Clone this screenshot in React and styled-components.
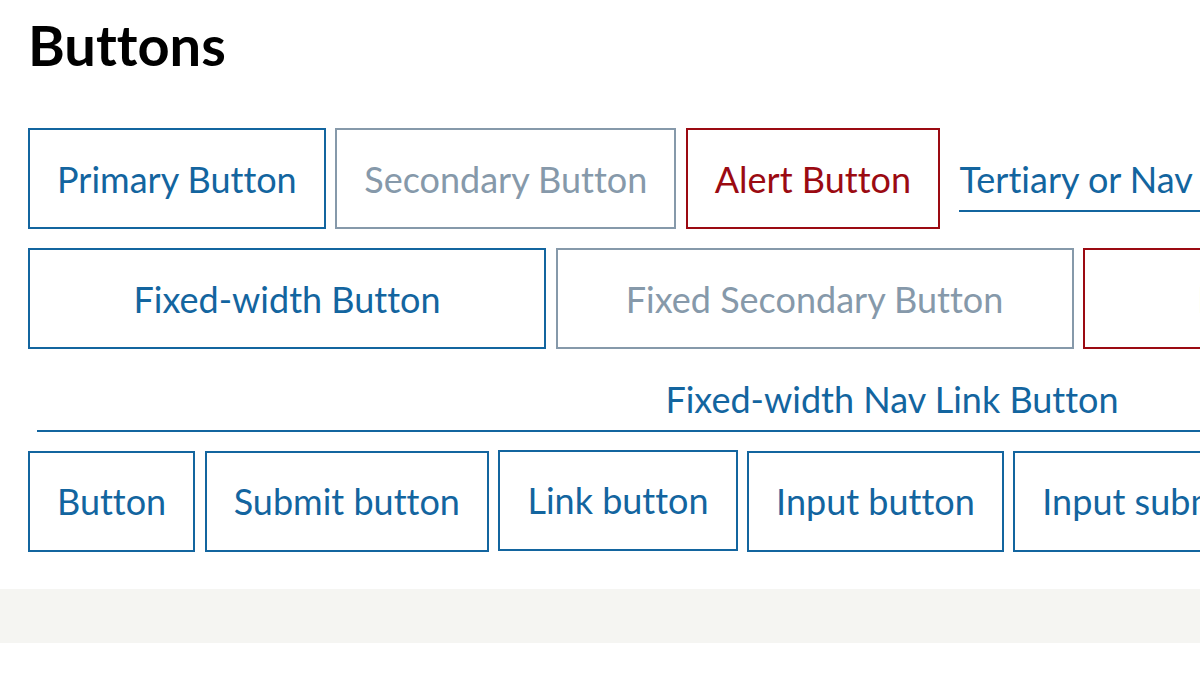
import React from 'react';
import styled, { createGlobalStyle, css } from 'styled-components';

const GlobalStyle = createGlobalStyle`
  html, body {
    margin: 0;
    padding: 0;
    background: #ffffff;
    overflow: hidden;
  }
  body {
    font-family: Lato, "Open Sans", sans-serif;
    font-variant-ligatures: none;
  }
`;

const BLUE = '#13659f';
const GRAY = '#8699aa';
const RED = '#9b0a12';

const Page = styled.div`
  width: 1200px;
  height: 676px;
  overflow: hidden;
`;

const Section = styled.section`
  padding: 12px 0 37px 28px;
`;

const Title = styled.h1`
  margin: 0 0 50px;
  font-size: 56px;
  line-height: 66px;
  font-weight: 700;
  color: #000;
  font-variant-ligatures: none;
`;

const Row = styled.div`
  display: flex;
  align-items: flex-start;
  flex-wrap: nowrap;
  gap: 9.5px;
  margin-bottom: 19px;

  &:last-child {
    margin-bottom: 0;
  }
`;

const variants = {
  primary: css`
    color: ${BLUE};
    border-color: ${BLUE};
  `,
  secondary: css`
    color: ${GRAY};
    border-color: ${GRAY};
  `,
  alert: css`
    color: ${RED};
    border-color: ${RED};
  `,
};

const Button = styled.button`
  flex-shrink: 0;
  box-sizing: border-box;
  margin: ${(p) => (p.$raise ? '-1px 0 0' : '0')};
  padding: 26.5px 27px;
  width: ${(p) => (p.$fixed ? '518px' : 'auto')};
  background: #fff;
  border: 2px solid;
  border-radius: 0;
  font-family: Lato, "Open Sans", sans-serif;
  font-size: 36px;
  line-height: 44px;
  font-weight: 400;
  font-variant-ligatures: none;
  text-align: center;
  text-decoration: none;
  white-space: nowrap;
  cursor: pointer;
  ${(p) => variants[p.$variant || 'primary']}
`;

const NavLink = styled.a`
  flex-shrink: 0;
  display: block;
  margin-left: 10px;
  padding: 29px 0 9px;
  border-bottom: 2px solid ${BLUE};
  color: ${BLUE};
  font-size: 36px;
  line-height: 44px;
  text-decoration: none;
  white-space: nowrap;
`;

const FixedNavLink = styled.a`
  display: block;
  box-sizing: border-box;
  width: 1710px;
  margin: 0 0 19px 9px;
  padding: 9px 0 8.5px;
  border-bottom: 2px solid ${BLUE};
  color: ${BLUE};
  font-size: 36px;
  line-height: 44px;
  text-align: center;
  text-decoration: none;
  white-space: nowrap;
`;

const Band = styled.div`
  height: 54px;
  background: #f5f5f2;
`;

export default function App() {
  return (
    <Page>
      <GlobalStyle />
      <Section>
        <Title>Buttons</Title>
        <Row>
          <Button $variant="primary">Primary Button</Button>
          <Button $variant="secondary">Secondary Button</Button>
          <Button $variant="alert">Alert Button</Button>
          <NavLink href="#">Tertiary or Nav Link Button</NavLink>
        </Row>
        <Row>
          <Button $fixed $variant="primary">Fixed-width Button</Button>
          <Button $fixed $variant="secondary">Fixed Secondary Button</Button>
          <Button $fixed $variant="alert">Fixed Alert Button</Button>
        </Row>
        <FixedNavLink href="#">Fixed-width Nav Link Button</FixedNavLink>
        <Row>
          <Button>Button</Button>
          <Button type="submit">Submit button</Button>
          <Button $raise as="a" href="#">Link button</Button>
          <Button as="input" type="button" value="Input button" />
          <Button as="input" type="submit" value="Input submit button" />
        </Row>
      </Section>
      <Band />
    </Page>
  );
}
